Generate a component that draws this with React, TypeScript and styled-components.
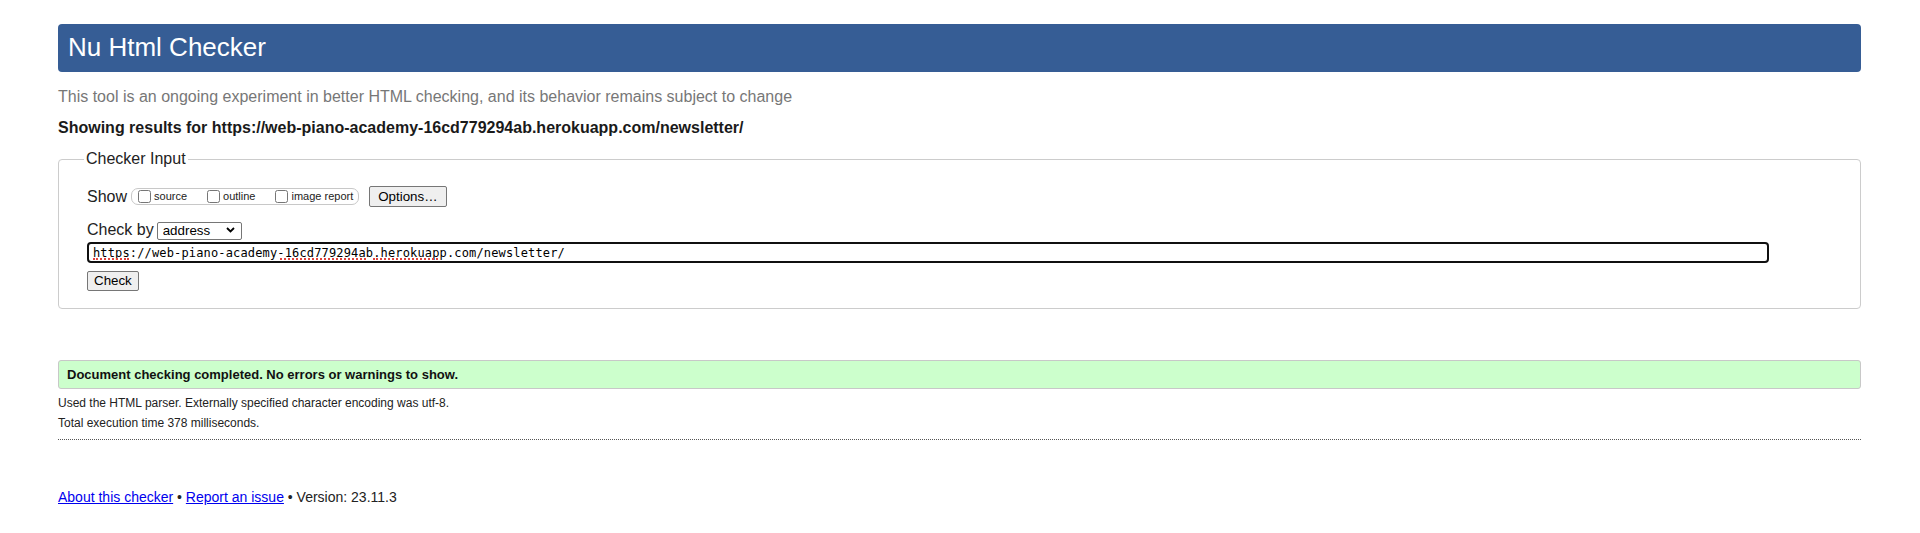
import React from "react";
import styled, { createGlobalStyle } from "styled-components";

const GlobalStyle = createGlobalStyle`
  html, body {
    margin: 0;
    padding: 0;
    background: #ffffff;
  }
  body {
    font-family: "Liberation Sans", Arial, sans-serif;
    color: #222222;
  }
`;

const Page = styled.div`
  padding: 24px 59px 0 58px;
`;

const TitleBar = styled.h1`
  margin: 0;
  height: 48px;
  padding: 0 10px;
  background: #365d95;
  border-radius: 4px;
  color: #ffffff;
  font-size: 26px;
  font-weight: 400;
  line-height: 46px;
`;

const Lead = styled.p`
  margin: 15px 0 0;
  font-size: 16px;
  line-height: 20px;
  color: #777777;
`;

const ResultsFor = styled.p`
  margin: 11px 0 0;
  font-size: 16px;
  font-weight: 700;
  line-height: 20px;
  color: #1a1a1a;
`;

const InputFieldset = styled.fieldset`
  margin: 12px 0 0;
  min-width: 0;
  padding: 18px 28px 17px;
  border: 1px solid #cccccc;
  border-radius: 4px;
`;

const Legend = styled.legend`
  margin-left: -3px;
  padding: 0 2px;
  font-size: 16px;
  line-height: 18px;
  color: #222222;
`;

const FormRow = styled.div<{ $top?: number; $height: number }>`
  display: flex;
  align-items: center;
  height: ${(p) => p.$height}px;
  margin-top: ${(p) => p.$top ?? 0}px;
`;

const FieldLabel = styled.span`
  font-size: 16px;
  line-height: 18px;
  color: #222222;
`;

const ShowGroup = styled.span`
  display: inline-flex;
  align-items: center;
  box-sizing: border-box;
  height: 17px;
  margin-left: 4px;
  padding: 0 5px 0 2px;
  border: 1px solid #c8c8c8;
  border-radius: 7px;
`;

const CheckOption = styled.label<{ $last?: boolean }>`
  display: inline-flex;
  align-items: center;
  margin-right: ${(p) => (p.$last ? 0 : 16)}px;
  font-size: 11px;
  line-height: 13px;
  color: #222222;

  input {
    width: 13px;
    height: 13px;
    margin: 0 3px 0 4px;
  }
`;

const NativeButton = styled.button<{ $wide?: boolean }>`
  box-sizing: border-box;
  height: ${(p) => (p.$wide ? 21 : 20)}px;
  margin-left: ${(p) => (p.$wide ? 10 : 0)}px;
  padding: 0 ${(p) => (p.$wide ? 8 : 6)}px;
  background: #efefef;
  border: 1px solid #767676;
  border-radius: 2px;
  color: #000000;
  font-family: "Liberation Sans", Arial, sans-serif;
  font-size: 13.333px;
  line-height: 16px;
`;

const SelectWrap = styled.span`
  position: relative;
  display: inline-block;
  margin-left: 3px;

  svg {
    position: absolute;
    top: 6px;
    right: 7px;
    pointer-events: none;
  }
`;

const Select = styled.select`
  appearance: none;
  box-sizing: border-box;
  width: 85px;
  height: 18px;
  padding: 0 20px 0 5px;
  background: #ffffff;
  border: 1px solid #767676;
  border-radius: 2px;
  color: #000000;
  font-family: "Liberation Sans", Arial, sans-serif;
  font-size: 13.333px;
  line-height: 16px;
`;

const UrlField = styled.div`
  position: relative;
  width: 1682px;
  margin-top: 3px;
`;

const UrlInput = styled.input`
  display: block;
  box-sizing: border-box;
  width: 100%;
  height: 21px;
  padding: 0 4px;
  border: 2px solid #101010;
  border-radius: 4px;
  outline: none;
  color: #000000;
  font-family: "DejaVu Sans Mono", "Liberation Mono", monospace;
  font-size: 12px;
  letter-spacing: 0.15px;
`;

// red dotted marks that the browser's spell checker puts under unknown words
const SpellMark = styled.span`
  position: absolute;
  top: 16px;
  height: 0;
  border-bottom: 2px dotted #e0443e;
  pointer-events: none;
`;

const SuccessBox = styled.div`
  margin-top: 51px;
  height: 29px;
  box-sizing: border-box;
  padding: 0 8px;
  background: #ccffcc;
  border: 1px solid #c8c8c8;
  border-radius: 3px;
  font-size: 13px;
  font-weight: 700;
  line-height: 27px;
  color: #111111;
`;

const Detail = styled.p<{ $first?: boolean }>`
  margin: ${(p) => (p.$first ? 4 : 0)}px 0 0;
  font-size: 12px;
  line-height: 20px;
  color: #222222;
`;

const DottedRule = styled.hr`
  margin: 6px 0 0;
  border: 0;
  border-top: 1px dotted #555555;
`;

const Footer = styled.p`
  margin: 47px 0 0;
  font-size: 14px;
  line-height: 20px;
  color: #222222;

  a {
    color: #0000ee;
    text-decoration: underline;
  }
`;

const Chevron = () => (
  <svg width="9" height="6" viewBox="0 0 9 6">
    <path d="M1 1 L4.5 4.5 L8 1" fill="none" stroke="#000" strokeWidth="1.8" />
  </svg>
);

const url = "https://web-piano-academy-16cd779294ab.herokuapp.com/newsletter/";

const charWidth = 7.19;
const misspelled = [
  { start: 0, length: 5 },
  { start: 26, length: 12 },
  { start: 39, length: 9 },
];

const App = () => {
  return (
    <>
      <GlobalStyle />
      <Page>
        <TitleBar>Nu Html Checker</TitleBar>
        <Lead>
          This tool is an ongoing experiment in better HTML checking, and its
          behavior remains subject to change
        </Lead>
        <ResultsFor>Showing results for {url}</ResultsFor>

        <InputFieldset>
          <Legend>Checker Input</Legend>
          <FormRow $height={21}>
            <FieldLabel>Show</FieldLabel>
            <ShowGroup>
              <CheckOption>
                <input type="checkbox" />
                source
              </CheckOption>
              <CheckOption>
                <input type="checkbox" />
                outline
              </CheckOption>
              <CheckOption $last>
                <input type="checkbox" />
                image report
              </CheckOption>
            </ShowGroup>
            <NativeButton $wide type="button">
              Options…
            </NativeButton>
          </FormRow>
          <FormRow $top={14} $height={18}>
            <FieldLabel>Check by</FieldLabel>
            <SelectWrap>
              <Select defaultValue="address">
                <option value="address">address</option>
                <option value="upload">file upload</option>
                <option value="text">text input</option>
              </Select>
              <Chevron />
            </SelectWrap>
          </FormRow>
          <UrlField>
            <UrlInput type="url" defaultValue={url} spellCheck />
            {misspelled.map((m) => (
              <SpellMark
                key={m.start}
                style={{
                  left: 6 + m.start * charWidth,
                  width: m.length * charWidth,
                }}
              />
            ))}
          </UrlField>
          <FormRow $top={8} $height={20}>
            <NativeButton type="submit">Check</NativeButton>
          </FormRow>
        </InputFieldset>

        <SuccessBox>
          Document checking completed. No errors or warnings to show.
        </SuccessBox>
        <Detail $first>
          Used the HTML parser. Externally specified character encoding was
          utf-8.
        </Detail>
        <Detail>Total execution time 378 milliseconds.</Detail>
        <DottedRule />

        <Footer>
          <a href="#about">About this checker</a> •{" "}
          <a href="#issue">Report an issue</a> • Version: 23.11.3
        </Footer>
      </Page>
    </>
  );
};

export default App;
